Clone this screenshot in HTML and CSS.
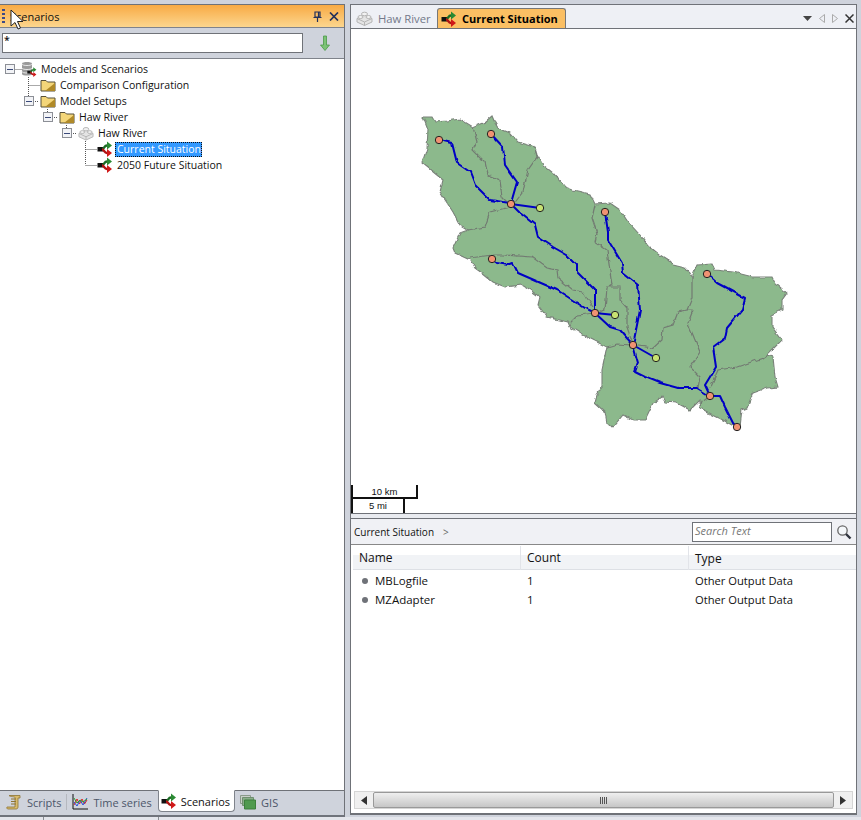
FILE: index.html
```html
<!DOCTYPE html>
<html lang="en">
<head>
<meta charset="utf-8">
<title>Scenarios</title>
<link rel="stylesheet" href="styles.css">
</head>
<body>
<svg class="defs" width="0" height="0" aria-hidden="true">
  <defs>
    <symbol id="scn" viewBox="0 0 16 16">
      <path d="M0.500 6h6v4.500h-6z" fill="#111"/>
      <path d="M5 8C7.500 8 7 4.500 10 4.500H11" fill="none" stroke="#1c6b25" stroke-width="2.400"/>
      <path d="M10 .5L15 4.500 10 8.500z" fill="#2a8a33"/>
      <path d="M5 8.500C7.500 8.500 7 12 10 12H11" fill="none" stroke="#b01212" stroke-width="2.400"/>
      <path d="M10 8L15 12 10 16z" fill="#d01818"/>
    </symbol>
    <symbol id="folder" viewBox="0 0 16 16">
      <path d="M1 3.500h5l1.500 1.500H15V14H1z" fill="#f4d679" stroke="#57503a"/>
      <path d="M15 6L5 14H15z" fill="#b08a28"/>
    </symbol>
    <symbol id="brick" viewBox="0 0 17 16">
      <path d="M8.500 5L16 8.500V12L8.500 15.500 1 12V8.500z" fill="#e4e4e4" stroke="#b5b5b5"/>
      <path d="M1 8.500L8.500 12 16 8.500M8.500 12V15.500" fill="none" stroke="#b5b5b5"/>
      <ellipse cx="8.500" cy="4" rx="3" ry="1.800" fill="#f2f2f2" stroke="#b5b5b5"/>
      <ellipse cx="4.500" cy="7" rx="2.500" ry="1.500" fill="#f2f2f2" stroke="#b5b5b5"/>
      <ellipse cx="12.500" cy="7" rx="2.500" ry="1.500" fill="#f2f2f2" stroke="#b5b5b5"/>
    </symbol>
    <filter id="rough" x="-5%" y="-5%" width="110%" height="110%">
      <feTurbulence type="fractalNoise" baseFrequency="0.16" numOctaves="2" seed="4"/>
      <feDisplacementMap in="SourceGraphic" scale="4" xChannelSelector="R" yChannelSelector="G"/>
    </filter>
    <filter id="wiggle" x="-5%" y="-5%" width="110%" height="110%">
      <feTurbulence type="fractalNoise" baseFrequency="0.13" numOctaves="1" seed="9"/>
      <feDisplacementMap in="SourceGraphic" scale="4" xChannelSelector="R" yChannelSelector="G"/>
    </filter>
  </defs>
</svg>

<div class="app">
  <section class="left">
    <header class="dock-title">
      <span class="grip"></span>
      <span class="dock-name">Scenarios</span>
      <svg class="pin" width="9" height="11" viewBox="0 0 9 11"><path d="M2 1h5v5H2zM0.500 6.500h8M4.500 7v4M5.500 1.500v4" fill="none" stroke="#23315c" stroke-width="1.200"/></svg>
      <svg class="close" width="10" height="9" viewBox="0 0 10 9"><path d="M1 .5l8 8M9 .5l-8 8" stroke="#23315c" stroke-width="1.700"/></svg>
    </header>
    <div class="filter-row">
      <div class="filter-box">*</div>
      <svg class="down" width="10" height="16" viewBox="0 0 10 16"><path d="M3.500 1h3v9H9.500L5 15.500.5 10h3z" fill="#7cc276" stroke="#4a9a48" stroke-width=".8"/></svg>
    </div>
    <div class="tree">
      <svg class="tree-lines" width="120" height="120" viewBox="0 59 120 120">
        <path d="M14.500 69.500h8M28.500 77v20M28.500 85.500h11M33 101.500h6M47.500 109v4M52 117.500h6M66.500 125v4M71 133.500h6M85.500 141v24M85.500 149.500h11M85.500 165.500h11" fill="none" stroke="#555" stroke-dasharray="1 1"/>
      </svg>
      <div class="node lv0">
        <span class="box"></span>
        <svg class="ic db" width="16" height="16" viewBox="0 0 16 16">
          <path d="M1 2.500C1 .5 11 .5 11 2.500V13C11 15 1 15 1 13z" fill="#9a9a9a"/>
          <path d="M1 3C1 5 11 5 11 3M1 7C1 9 11 9 11 7M1 10.500C1 12.500 11 12.500 11 10.500" fill="none" stroke="#e8e8e8"/>
          <use href="#scn" x="6" y="6" width="10" height="10"/>
        </svg>
        <span class="label">Models and Scenarios</span>
      </div>
      <div class="node lv1 nobox">
        <svg class="ic" width="16" height="16"><use href="#folder"/></svg>
        <span class="label">Comparison Configuration</span>
      </div>
      <div class="node lv1">
        <span class="box"></span>
        <svg class="ic" width="16" height="16"><use href="#folder"/></svg>
        <span class="label">Model Setups</span>
      </div>
      <div class="node lv2">
        <span class="box"></span>
        <svg class="ic" width="16" height="16"><use href="#folder"/></svg>
        <span class="label">Haw River</span>
      </div>
      <div class="node lv3">
        <span class="box"></span>
        <svg class="ic" width="16" height="16"><use href="#brick"/></svg>
        <span class="label">Haw River</span>
      </div>
      <div class="node lv4 nobox">
        <svg class="ic" width="16" height="16"><use href="#scn"/></svg>
        <span class="label sel">Current Situation</span>
      </div>
      <div class="node lv4 nobox">
        <svg class="ic" width="16" height="16"><use href="#scn"/></svg>
        <span class="label">2050 Future Situation</span>
      </div>
    </div>
    <nav class="bottom-tabs">
      <div class="btab">
        <svg width="16" height="16" viewBox="0 0 16 16"><path d="M3 1.500h11V4h-2v9c0 1.500-1 2-2 2H2c-1 0-1.500-1-1-2h8V3.500C9 2.500 4 3 3 1.500z" fill="#d8bb6c" stroke="#8e7435" stroke-width=".8"/><path d="M5 5h5M5 7.500h5M5 10h5" stroke="#8e7435"/></svg>
        <span>Scripts</span>
      </div>
      <span class="btab-sep"></span>
      <div class="btab">
        <svg width="16" height="16" viewBox="0 0 16 16"><path d="M1 0v15h15" fill="none" stroke="#111"/><path d="M2 11l3-6 2.500 5L10 5l2.500 5L15 6" fill="none" stroke="#e02020"/><path d="M2 8l3 4 3-6 3 5 4-7" fill="none" stroke="#2a50d8"/><path d="M2 4l3 5 3-3 3 2 4-3" fill="none" stroke="#30a030"/></svg>
        <span>Time series</span>
      </div>
      <div class="btab active">
        <svg width="16" height="16"><use href="#scn"/></svg>
        <span>Scenarios</span>
      </div>
      <div class="btab">
        <svg width="16" height="16" viewBox="0 0 16 16"><path d="M.5 1.500h10v8H.5z" fill="#c9cfc9" stroke="#8a9a8a"/><path d="M2.500 3.500h11v8h-11z" fill="#8aae8a" stroke="#6f8f6f"/><path d="M4.500 6h11v9h-11z" fill="#4f9a4f" stroke="#3d7f3d"/></svg>
        <span>GIS</span>
      </div>
    </nav>
  </section>

  <section class="right">
    <div class="doc-tabs">
      <div class="dtab">
        <svg width="17" height="16"><use href="#brick"/></svg>
        <span>Haw River</span>
      </div>
      <div class="dtab active">
        <svg width="16" height="16"><use href="#scn"/></svg>
        <span>Current Situation</span>
      </div>
      <div class="doc-ctrl">
        <svg width="9" height="5" viewBox="0 0 9 5"><path d="M0 0h9L4.500 5z" fill="#444"/></svg>
        <svg width="6" height="9" viewBox="0 0 6 9"><path d="M5.500.5v8L.5 4.500z" fill="none" stroke="#aaa"/></svg>
        <svg width="6" height="9" viewBox="0 0 6 9"><path d="M.5.5v8l5-4z" fill="none" stroke="#aaa"/></svg>
        <svg width="9" height="9" viewBox="0 0 9 9"><path d="M.5.5l8 8M8.500.5l-8 8" stroke="#333" stroke-width="1.500"/></svg>
      </div>
    </div>
    <div class="map">
      <svg class="map-art" width="505" height="485" viewBox="351 28 505 485">
        <g filter="url(#rough)">
          <path class="basin" d="M423 117L432 117 435 122 447 121 460 119 473 127 485 122 492 116 495 123 498 128 510 133 518 142 535 147 537 155 543 165 553 173 565 187 573 190 590 194 595 204 610 203 620 210 628 222 640 235 650 247 660 255 668 260 673 265 685 268 690 273 692 277 697 265 712 264 715 270 733 272 753 277 772 277 775 283 787 293 782 300 782 310 772 315 772 327 782 340 767 355 773 357 775 377 778 387 767 388 753 393 747 408 742 410 740 427 737 428 723 420 713 415 700 408 700 400 690 410 677 403 665 402 662 397 653 403 645 420 633 420 623 415 612 428 607 423 605 412 595 403 597 395 602 387 602 370 607 347 593 340 583 335 570 327 568 322 547 317 538 305 540 297 530 290 522 285 505 287 493 282 482 273 475 268 470 260 455 253 453 248 460 233 468 230 460 225 453 212 440 192 443 180 422 163 427 148 428 130z"/>
          <path class="ridge" d="M473 127L477 142 473 150 485 162 488 175 500 180 502 197 510 205M535 147L537 157 528 170 523 192 513 205M510 207L490 212 485 227 468 230M470 258L492 255 503 255 532 257 547 268 557 270 558 278 573 290 583 292 593 307M595 205L592 218 597 233 595 242 607 250 612 285 607 288 605 310 598 313M607 287L620 287 620 300 627 308 627 327 632 342M595 313L578 315 570 323M607 347L617 344 633 345 653 348 662 340 663 328 673 325 678 312 687 310 692 298 692 277M687 310L693 310 688 323 700 352 690 367 700 377 698 388M710 388L718 370 737 367 763 358 767 355M710 396L702 402 700 408"/>
        </g>
        <g filter="url(#wiggle)">
          <path class="stream" d="M439 140L452 143 455 155 457 163 470 172 475 185 490 200 510 203M491 134L503 147 505 165 517 182 511 203M511 204L520 213 535 225 538 237 553 247 567 255 577 265 577 272 587 282 595 290 595 312M492 259L497 263 508 265 513 263 518 273 557 290 588 310 595 313M595 313L610 327 620 330 633 345M605 212L608 232 608 240 622 263 623 273 638 285 640 310 633 345M633 345L638 363 635 372 645 377 660 383 678 388 697 388 710 396M707 274L717 283 745 298 742 310 727 328 725 338 713 347 716 367 705 385 710 396M710 396L720 396 725 407 733 423 737 427"/>
        </g>
        <path class="stream" d="M511 204L540 208M595 313L615 315M633 345L656 358"/>
        <g class="pt-o">
          <circle cx="439" cy="140" r="3.700"/><circle cx="491" cy="134" r="3.700"/><circle cx="511" cy="204" r="3.700"/><circle cx="605" cy="212" r="3.700"/><circle cx="492" cy="259" r="3.700"/><circle cx="595" cy="313" r="3.700"/><circle cx="633" cy="345" r="3.700"/><circle cx="707" cy="274" r="3.700"/><circle cx="710" cy="396" r="3.700"/><circle cx="737" cy="427" r="3.700"/>
        </g>
        <g class="pt-g">
          <circle cx="540" cy="208" r="3.700"/><circle cx="615" cy="315" r="3.700"/><circle cx="656" cy="358" r="3.700"/>
        </g>
      </svg>
      <div class="scale">
        <div class="scale-km">10 km</div>
        <div class="scale-mi">5 mi</div>
      </div>
    </div>
    <div class="split"></div>
    <div class="list-panel">
      <div class="crumbs">
        <span class="crumb">Current Situation</span>
        <span class="crumb-sep">&gt;</span>
        <span class="search-box">Search Text</span>
        <svg class="lens" width="16" height="16" viewBox="0 0 16 16"><circle cx="6.500" cy="6.500" r="4.700" fill="#f4f7fa" stroke="#666" stroke-width="1.300"/><path d="M10 10l4.500 4.500" stroke="#30353f" stroke-width="2.400"/></svg>
      </div>
      <div class="table">
        <div class="thead">
          <span class="c1">Name</span><span class="c2">Count</span><span class="c3">Type</span>
        </div>
        <div class="trow"><span class="c1"><i class="dot"></i>MBLogfile</span><span class="c2">1</span><span class="c3">Other Output Data</span></div>
        <div class="trow"><span class="c1"><i class="dot"></i>MZAdapter</span><span class="c2">1</span><span class="c3">Other Output Data</span></div>
      </div>
      <div class="hscroll">
        <svg width="6" height="9" viewBox="0 0 6 9"><path d="M6 0v9L0 4.500z" fill="#333"/></svg>
        <div class="thumb"><span class="thumb-grip"></span></div>
        <svg width="6" height="9" viewBox="0 0 6 9"><path d="M0 0v9l6-4.500z" fill="#333"/></svg>
      </div>
    </div>
  </section>
</div>
<footer class="status"><span></span><span></span></footer>

<svg class="cursor" width="14" height="22" viewBox="0 0 14 22"><path d="M1 1v16l4-3.500 3 6.500 2.500-1-3-6.500H13z" fill="#fff" stroke="#222"/></svg>
</body>
</html>
```

FILE: styles.css
```css
* { box-sizing: border-box; }
html, body { margin: 0; height: 100%; }
body {
  width: 861px;
  height: 820px;
  overflow: hidden;
  position: relative;
  background: #cfd3dc;
  font-family: "Open Sans", "Noto Sans", sans-serif;
  font-size: 10.5px;
  color: #111;
}
.defs { position: absolute; }
.app {
  display: flex;
  height: 817px;
  padding-top: 4px;
}

/* left dock */
.left {
  width: 345px;
  flex: none;
  display: flex;
  flex-direction: column;
  border-top: 1px solid #6f7278;
  border-right: 1px solid #6f7278;
  border-bottom: 2px solid #70747c;
}
.dock-title {
  height: 23px;
  flex: none;
  display: flex;
  align-items: center;
  padding-right: 4px;
  background: linear-gradient(#f8aa44, #fcd68e);
  border-bottom: 1px solid #7f838b;
}
.grip {
  width: 3px;
  height: 15px;
  margin-left: 2px;
  background: repeating-linear-gradient(#3c4a88 0 2px, transparent 2px 4px);
}
.dock-name { margin-left: 5px; font-size: 11px; flex: 1; }
.pin { margin-right: 7px; }
.close { margin-right: 1px; }
.filter-row {
  height: 31px;
  flex: none;
  display: flex;
  align-items: center;
  padding: 0 14px 0 2px;
  background: #cfd3dc;
  border-bottom: 1px solid #7f838b;
}
.filter-box {
  width: 301px;
  height: 20px;
  background: #fff;
  border: 1px solid #6f7278;
  padding-left: 1px;
  line-height: 12px;
  font-size: 10.5px;
  font-weight: 600;
}
.down { margin-left: 17px; }

.tree {
  flex: 1;
  position: relative;
  padding-top: 2px;
  background: #fff;
}
.tree-lines { position: absolute; left: 0; top: 0; }
.node {
  position: relative;
  height: 16px;
  display: flex;
  align-items: center;
}
.lv0 { padding-left: 5px; }
.lv1 { padding-left: 24px; }
.lv2 { padding-left: 43px; }
.lv3 { padding-left: 62px; }
.lv4 { padding-left: 81px; }
.box {
  width: 10px;
  height: 10px;
  flex: none;
  margin-right: 6px;
  background: linear-gradient(#3a4a7a, #3a4a7a) center / 6px 1px no-repeat, #f2f3f6;
  border: 1px solid #8c8f96;
}
.nobox .ic { margin-left: 16px; }
.ic { flex: none; }
.label { margin-left: 3px; padding: 0 1px; line-height: 15px; white-space: nowrap; }
.sel {
  margin-left: 2px;
  background: #3399ff;
  color: #fff;
  outline: 1px dotted #111;
  outline-offset: -1px;
  padding: 0 1px 0 2px;
}

.bottom-tabs {
  height: 25px;
  flex: none;
  display: flex;
  align-items: flex-start;
  padding-left: 5px;
  background: #cfd3dc;
  border-top: 1px solid #6f7278;
}
.btab {
  height: 22px;
  display: flex;
  align-items: center;
  gap: 5px;
  padding: 0 5px 0 1px;
  color: #4c566a;
  font-size: 11px;
}
.btab.active {
  margin: -1px 4px 0 1px;
  gap: 4px;
  padding: 0 4px 0 2px;
  color: #111;
  background: #fff;
  border: 1px solid #7f838b;
  border-top-color: #fff;
  border-radius: 0 0 4px 4px;
}
.btab-sep { width: 1px; height: 16px; margin: 3px 4px 0 0; background: #b5b8bf; }

/* right dock */
.right {
  width: 507px;
  margin: 0 0 2px 5px;
  flex: none;
  display: flex;
  flex-direction: column;
  border: 1px solid #6f7278;
  border-width: 1px 1px 2px 1px;
}
.doc-tabs {
  height: 23px;
  flex: none;
  display: flex;
  align-items: flex-end;
  padding-left: 5px;
  background: #eef0f5;
}
.dtab {
  height: 20px;
  display: flex;
  align-items: center;
  gap: 5px;
  width: 81px;
  color: #73798a;
  font-size: 11.3px;
  white-space: nowrap;
}
.dtab.active {
  width: 129px;
  padding-left: 3px;
  color: #000;
  font-size: 11px;
  font-weight: 700;
  background: #fbbf63;
  border: 1px solid #777;
  border-bottom: 0;
  border-radius: 3px 3px 0 0;
}
.doc-ctrl {
  margin-left: auto;
  height: 20px;
  padding-right: 2px;
  display: flex;
  align-items: center;
  gap: 7px;
}
.map {
  height: 485px;
  flex: none;
  position: relative;
  background: #fff;
  border-top: 1px solid #6f7278;
  overflow: hidden;
}
.map-art { display: block; margin-top: -1px; }
.basin { fill: #8cb98c; stroke: #7a827a; stroke-width: 1.100; }
.ridge { fill: none; stroke: #727a72; stroke-width: 1.200; }
.stream { fill: none; stroke: #0000c4; stroke-width: 2; stroke-linejoin: round; }
.pt-o circle { fill: #f09272; stroke: #222; }
.pt-g circle { fill: #c8e272; stroke: #222; }

.scale {
  position: absolute;
  left: 0;
  bottom: 0;
  width: 67px;
  font-family: "Liberation Sans", sans-serif;
  font-size: 9.5px;
  text-align: center;
}
.scale-km {
  height: 14px;
  line-height: 11px;
  border: 2px solid #111;
  border-top: 0;
  padding-top: 1px;
}
.scale-mi {
  width: 54px;
  height: 14px;
  line-height: 14px;
  border: 2px solid #111;
  border-width: 0 2px;
}
.split {
  height: 6px;
  flex: none;
  background: #e9ebf0;
  border-top: 1px solid #6f7278;
  border-bottom: 1px solid #6f7278;
}
.list-panel {
  flex: 1;
  display: flex;
  flex-direction: column;
  background: #fff;
}
.crumbs {
  height: 26px;
  flex: none;
  display: flex;
  align-items: center;
  padding: 0 4px 0 3px;
  background: #f0f1f5;
  border-bottom: 1px solid #888;
  white-space: nowrap;
}
.crumb { font-size: 10px; }
.crumb-sep { margin-left: 9px; color: #666; font-size: 10px; }
.search-box {
  margin-left: auto;
  width: 140px;
  height: 20px;
  padding-left: 2px;
  background: #fff;
  border: 1px solid #6f7278;
  color: #777;
  font-size: 11px;
  font-style: italic;
  line-height: 15px;
}
.lens { margin-left: 4px; }
.table { flex: 1; padding: 1px 0 0 2px; font-size: 11.5px; }
.thead {
  height: 24px;
  display: flex;
  align-items: center;
  background: linear-gradient(#fff 0 40%, #f1f3f6 40%);
  border-bottom: 1px solid #dde0e5;
  font-size: 12px;
}
.trow {
  height: 19px;
  display: flex;
  align-items: center;
}
.thead + .trow { margin-top: 1px; }
.c1 { width: 168px; padding-left: 6px; display: flex; align-items: center; }
.c2 { width: 168px; padding-left: 6px; }
.c3 { padding-left: 6px; }
.trow .c3 { font-size: 11.2px; }
.thead .c1, .thead .c2 { height: 24px; line-height: 24px; border-right: 1px solid #e2e4e9; }
.thead .c3 { padding-top: 1px; }
.thead .c1 { padding-top: 1px; }
.trow .c1 { padding-left: 9px; }
.dot {
  width: 6px;
  height: 6px;
  margin-right: 7px;
  border-radius: 50%;
  background: #6f7278;
}
.hscroll {
  height: 18px;
  flex: none;
  margin: 0 3px 4px;
  display: flex;
  align-items: center;
  gap: 6px;
  padding: 0 6px;
  background: #f0f0f0;
  border: 1px solid #d5d5d5;
}
.thumb {
  flex: 1;
  height: 16px;
  display: flex;
  align-items: center;
  justify-content: center;
  background: linear-gradient(#efefef, #c6c6c6);
  border: 1px solid #999;
  border-radius: 2px;
}
.thumb-grip {
  width: 7px;
  height: 7px;
  background: repeating-linear-gradient(90deg, #555 0 1px, transparent 1px 2px);
}

.status {
  height: 3px;
  position: relative;
  background: #e4e6ec;
}
.status span { position: absolute; top: 0; width: 1px; height: 3px; background: #8a8d93; }
.status span:first-child { left: 43px; }
.status span:last-child { left: 158px; }

.cursor { position: absolute; left: 10px; top: 9px; }
```
